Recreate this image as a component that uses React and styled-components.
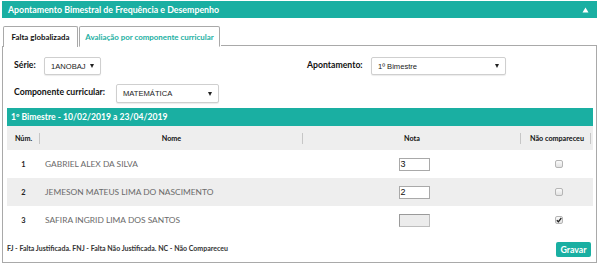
import React from "react";
import styled, { createGlobalStyle } from "styled-components";

const TEAL = "#1aafa2";

const Global = createGlobalStyle`
  html, body { margin: 0; padding: 0; background: #fff; }
  body { font-family: Lato, "Noto Sans", sans-serif; }
`;

const Wrap = styled.div`
  width: 595px;
  margin: 1px 0 0 2px;
`;

const Title = styled.div`
  height: 17px;
  background: ${TEAL};
  color: #fff;
  font-weight: 700;
  font-size: 8.8px;
  display: flex;
  align-items: center;
  justify-content: space-between;
  padding: 0 8px 0 6px;
`;

const Tabs = styled.div`
  display: flex;
  margin-top: 8px;
  height: 20px;
  margin-left: 1px;
`;

const Tab = styled.div`
  border: 1px solid #a9a9a9;
  border-bottom: ${(p) => (p.$active ? "none" : "1px solid transparent")};
  border-radius: 2px 2px 0 0;
  background: #fff;
  color: ${(p) => (p.$active ? "#111" : TEAL)};
  font-weight: 700;
  font-size: 7.9px;
  width: ${(p) => p.$w}px;
  justify-content: center;
  display: flex;
  align-items: center;
  margin-right: 1px;
  box-sizing: border-box;
  height: 21px;
`;

const TabFill = styled.div`
  flex: 1;
  border-bottom: 1px solid #a9a9a9;
  box-sizing: border-box;
`;

const Panel = styled.div`
  border: 1px solid #a9a9a9;
  border-top: none;
  padding: 11px 3px 0 4px;
  height: 217px;
  box-sizing: border-box;
`;

const FormRow = styled.div`
  display: flex;
  align-items: center;
  margin-bottom: ${(p) => p.$mb || 0}px;
  padding-left: 7px;
`;

const Field = styled.div`
  display: flex;
  align-items: center;
  width: ${(p) => (p.$w ? p.$w + "px" : "auto")};
`;

const Label = styled.span`
  font-weight: 700;
  font-size: 8.7px;
  color: #111;
  width: ${(p) => p.$w}px;
  position: relative;
  top: ${(p) => p.$dy || 0}px;
`;

const Select = styled.div`
  width: ${(p) => p.$w}px;
  height: ${(p) => p.$h || 18}px;
  box-sizing: border-box;
  border: 1px solid #cfcfcf;
  border-radius: 2px;
  box-shadow: 0 1px 1px rgba(0,0,0,0.08);
  background: #fff;
  display: flex;
  align-items: center;
  justify-content: space-between;
  padding: 0 6px 0 6px;
  font-family: "Liberation Sans", Arial, sans-serif;
  font-size: 7.6px;
  color: #222;
`;

const Caret = styled.span`
  width: 0;
  height: 0;
  border-left: 2.5px solid transparent;
  border-right: 2.5px solid transparent;
  border-top: 4px solid #222;
`;

const Table = styled.div`
  margin-top: 5px;
`;

const Band = styled.div`
  height: 18px;
  background: ${TEAL};
  color: #fff;
  font-weight: 700;
  font-size: 8.6px;
  display: flex;
  align-items: center;
  padding-left: 4px;
`;

const Row = styled.div`
  display: grid;
  grid-template-columns: 33px 263px 218px 1fr;
  height: ${(p) => p.$h}px;
  align-items: center;
  background: ${(p) => (p.$shade ? "#eeeeee" : "#fff")};
`;

const Th = styled.div`
  height: 100%;
  display: flex;
  align-items: center;
  justify-content: center;
  font-weight: 700;
  font-size: 7.2px;
  color: #111;
  background-image: linear-gradient(#c6c6c6, #c6c6c6);
  background-repeat: no-repeat;
  background-size: 1px 11px;
  background-position: right ${(p) => p.$sepOff || 0}px center;
`;

const Num = styled.div`
  text-align: center;
  font-weight: 700;
  font-size: 7.4px;
  color: #222;
`;

const Name = styled.div`
  padding-left: 5px;
  font-size: 8.4px;
  color: #6a6a6a;
`;

const NoteCell = styled.div`
  display: flex;
  justify-content: center;
  padding-left: 4px;
`;

const NoteInput = styled.div`
  width: 31px;
  height: 13px;
  box-sizing: border-box;
  border: 1px solid ${(p) => (p.$disabled ? "#bdbdbd" : "#a9a9a9")};
  border-top-color: ${(p) => (p.$disabled ? "#9a9a9a" : "#a9a9a9")};
  border-left-color: ${(p) => (p.$disabled ? "#9a9a9a" : "#a9a9a9")};
  background: ${(p) => (p.$disabled ? "#ececec" : "#fff")};
  font-family: "Liberation Sans", Arial, sans-serif;
  font-size: 9px;
  line-height: 11px;
  padding-left: 1px;
  color: #111;
`;

const CheckCell = styled.div`
  display: flex;
  justify-content: center;
  padding-left: 3px;
`;

const Check = styled.span`
  width: 8px;
  height: 8px;
  box-sizing: border-box;
  border: 1px solid #b5b5b5;
  border-radius: 2px;
  background: linear-gradient(#fbfbfb, #e2e2e2);
  display: flex;
  align-items: center;
  justify-content: center;
`;

const Footer = styled.div`
  display: flex;
  align-items: center;
  justify-content: space-between;
  height: 28px;
  padding: 2px 2px 0 0;
  box-sizing: border-box;
`;

const Legend = styled.div`
  font-weight: 700;
  font-size: 7px;
  color: #333;
  margin-top: -3px;
`;

const Button = styled.div`
  background: ${TEAL};
  color: #fff;
  font-weight: 700;
  font-size: 8.8px;
  border-radius: 2px;
  width: 35px;
  height: 15px;
  display: flex;
  align-items: center;
  justify-content: center;
`;

const students = [
  { n: 1, name: "GABRIEL ALEX DA SILVA", nota: "3", nc: false },
  { n: 2, name: "JEMESON MATEUS LIMA DO NASCIMENTO", nota: "2", nc: false },
  { n: 3, name: "SAFIRA INGRID LIMA DOS SANTOS", nota: "", nc: true },
];

export default function App() {
  return (
    <>
      <Global />
      <Wrap>
        <Title>
          <span>Apontamento Bimestral de Frequência e Desempenho</span>
          <svg width="7" height="6" viewBox="0 0 7 6">
            <polygon points="3.5,0.5 6.5,5.5 0.5,5.5" fill="#fff" />
          </svg>
        </Title>
        <Tabs>
          <Tab $active $w={75}>Falta globalizada</Tab>
          <Tab $w={141}>Avaliação por componente curricular</Tab>
          <TabFill />
        </Tabs>
        <Panel>
          <FormRow $mb={9}>
            <Field $w={293}>
              <Label $w={30} $dy={-2}>Série:</Label>
              <Select $w={57}>
                <span>1ANOBAJ</span>
                <Caret />
              </Select>
            </Field>
            <Field>
              <Label $w={64} $dy={-2}>Apontamento:</Label>
              <Select $w={135}>
                <span>1º Bimestre</span>
                <Caret />
              </Select>
            </Field>
          </FormRow>
          <FormRow>
            <Field>
              <Label $w={102} $dy={-2}>Componente curricular:</Label>
              <Select $w={103} $h={19}>
                <span>MATEMÁTICA</span>
                <Caret />
              </Select>
            </Field>
          </FormRow>
          <Table>
            <Band>1º Bimestre - 10/02/2019 a 23/04/2019</Band>
            <Row $h={24} $shade>
              <Th>Núm.</Th>
              <Th>Nome</Th>
              <Th>Nota</Th>
              <Th $sepOff={2}>Não compareceu</Th>
            </Row>
            {students.map((s, i) => (
              <Row key={s.n} $h={28} $shade={i % 2 === 1}>
                <Num>{s.n}</Num>
                <Name>{s.name}</Name>
                <NoteCell>
                  <NoteInput $disabled={s.nc}>{s.nota}</NoteInput>
                </NoteCell>
                <CheckCell>
                  <Check>
                    {s.nc && (
                      <svg width="6" height="6" viewBox="0 0 6 6">
                        <path d="M0.8 3.2 L2.4 4.8 L5.3 1" stroke="#222" strokeWidth="1.3" fill="none" />
                      </svg>
                    )}
                  </Check>
                </CheckCell>
              </Row>
            ))}
            <Footer>
              <Legend>FJ - Falta Justificada. FNJ - Falta Não Justificada. NC - Não Compareceu</Legend>
              <Button>Gravar</Button>
            </Footer>
          </Table>
        </Panel>
      </Wrap>
    </>
  );
}
